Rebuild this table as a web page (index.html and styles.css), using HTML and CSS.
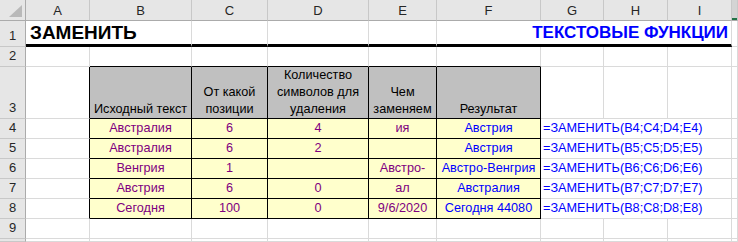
FILE: index.html
```html
<!DOCTYPE html>
<html lang="ru">
<head>
<meta charset="utf-8">
<title>ЗАМЕНИТЬ</title>
<link rel="stylesheet" href="styles.css">
</head>
<body>
<div class="sheet">
  <div class="c corner"><svg width="14" height="13" viewBox="0 0 14 13"><polygon points="13,0 13,12 0,12" fill="#b9b9b9"/></svg></div>
  <div class="c ch">A</div>
  <div class="c ch">B</div>
  <div class="c ch">C</div>
  <div class="c ch">D</div>
  <div class="c ch">E</div>
  <div class="c ch">F</div>
  <div class="c ch">G</div>
  <div class="c ch">H</div>
  <div class="c ch">I</div>
  <div class="c ch chj"></div>

  <div class="c rh">1</div>
  <div class="c thick span2 title">ЗАМЕНИТЬ</div>
  <div class="c thick"></div>
  <div class="c thick"></div>
  <div class="c thick"></div>
  <div class="c thick span4 subtitle">ТЕКСТОВЫЕ ФУНКЦИИ</div>
  <div class="c"></div>

  <div class="c rh">2</div>
  <div class="c"></div>
  <div class="c bb"></div>
  <div class="c bb"></div>
  <div class="c bb"></div>
  <div class="c bb"></div>
  <div class="c bb"></div>
  <div class="c"></div>
  <div class="c"></div>
  <div class="c"></div>
  <div class="c"></div>

  <div class="c rh">3</div>
  <div class="c br"></div>
  <div class="c th">Исходный текст</div>
  <div class="c th"><span>От какой<br>позиции</span></div>
  <div class="c th"><span>Количество<br>символов для<br>удаления</span></div>
  <div class="c th"><span>Чем<br>заменяем</span></div>
  <div class="c th">Результат</div>
  <div class="c"></div>
  <div class="c"></div>
  <div class="c"></div>
  <div class="c"></div>

  <div class="c rh">4</div>
  <div class="c br"></div>
  <div class="c d">Австралия</div>
  <div class="c d">6</div>
  <div class="c d">4</div>
  <div class="c d">ия</div>
  <div class="c d res">Австрия</div>
  <div class="c span3 formula">=ЗАМЕНИТЬ(B4;C4;D4;E4)</div>
  <div class="c"></div>

  <div class="c rh">5</div>
  <div class="c br"></div>
  <div class="c d">Австралия</div>
  <div class="c d">6</div>
  <div class="c d">2</div>
  <div class="c d"></div>
  <div class="c d res">Австрия</div>
  <div class="c span3 formula">=ЗАМЕНИТЬ(B5;C5;D5;E5)</div>
  <div class="c"></div>

  <div class="c rh">6</div>
  <div class="c br"></div>
  <div class="c d">Венгрия</div>
  <div class="c d">1</div>
  <div class="c d"></div>
  <div class="c d">Австро-</div>
  <div class="c d res">Австро-Венгрия</div>
  <div class="c span3 formula">=ЗАМЕНИТЬ(B6;C6;D6;E6)</div>
  <div class="c"></div>

  <div class="c rh">7</div>
  <div class="c br"></div>
  <div class="c d">Австрия</div>
  <div class="c d">6</div>
  <div class="c d">0</div>
  <div class="c d">ал</div>
  <div class="c d res">Австралия</div>
  <div class="c span3 formula">=ЗАМЕНИТЬ(B7;C7;D7;E7)</div>
  <div class="c"></div>

  <div class="c rh">8</div>
  <div class="c br"></div>
  <div class="c d">Сегодня</div>
  <div class="c d">100</div>
  <div class="c d">0</div>
  <div class="c d">9/6/2020</div>
  <div class="c d res">Сегодня 44080</div>
  <div class="c span3 formula">=ЗАМЕНИТЬ(B8;C8;D8;E8)</div>
  <div class="c"></div>

  <div class="c rh">9</div>
  <div class="c"></div>
  <div class="c"></div>
  <div class="c"></div>
  <div class="c"></div>
  <div class="c"></div>
  <div class="c"></div>
  <div class="c"></div>
  <div class="c"></div>
  <div class="c"></div>
  <div class="c"></div>

  <div class="c rh"></div>
  <div class="c"></div>
  <div class="c"></div>
  <div class="c"></div>
  <div class="c"></div>
  <div class="c"></div>
  <div class="c"></div>
  <div class="c"></div>
  <div class="c"></div>
  <div class="c"></div>
  <div class="c"></div>
</div>
</body>
</html>
```

FILE: styles.css
```css
html, body {
  margin: 0;
  padding: 0;
  background: #ffffff;
}

body {
  font-family: "Liberation Sans", Arial, sans-serif;
  font-size: 12.7px;
  color: #000;
}

.sheet {
  display: grid;
  grid-template-columns: 26px 64px 102px 76px 101px 68px 104px 63px 64px 64px 1fr;
  grid-template-rows: 21px 26px 20px 52px repeat(6, 20px) 1fr;
  width: 738px;
  height: 242px;
  overflow: hidden;
}

.c {
  box-sizing: border-box;
  border-right: 1px solid #dadada;
  border-bottom: 1px solid #dadada;
  display: flex;
  align-items: flex-end;
  padding: 0 2px 1px;
  line-height: 17px;
  white-space: nowrap;
  min-width: 0;
}

.corner {
  background: #e6e6e6;
  border-right: 1px solid #ababab;
  border-bottom: 1px solid #ababab;
  justify-content: flex-end;
  align-items: flex-end;
  padding: 0 2px 2px 0;
}

.corner svg { display: block; }

.ch {
  background: #e6e6e6;
  border-right: 1px solid #c8c8c8;
  border-bottom: 1px solid #ababab;
  justify-content: center;
  align-items: center;
  padding: 0;
  font-size: 13px;
  color: #262626;
}

.chj {
  background: #d4d4d4;
  box-shadow: inset 0 -2px 0 #217346;
}

.rh {
  background: #e6e6e6;
  border-right: 1px solid #ababab;
  border-bottom: 1px solid #c8c8c8;
  justify-content: center;
  padding: 0 0 2px;
  font-size: 13px;
  color: #262626;
}

.span2 { grid-column: span 2; }
.span3 { grid-column: span 3; }
.span4 { grid-column: span 4; }

.thick { border-bottom: 3px solid #000; }

.title {
  font-size: 19px;
  font-weight: bold;
  line-height: 22px;
  padding-left: 4px;
  padding-bottom: 0;
}

.subtitle {
  justify-content: flex-end;
  font-size: 17px;
  font-weight: bold;
  line-height: 22px;
  color: #0000ff;
  padding-right: 3px;
  padding-bottom: 0;
}

.bb { border-bottom: 1px solid #000; }
.br { border-right: 1px solid #000; }

.th {
  background: #c0c0c0;
  border-right: 1px solid #000;
  border-bottom: 1px solid #000;
  justify-content: center;
  text-align: center;
  padding: 0 2px;
}

.d {
  background: #ffffcc;
  border-right: 1px solid #000;
  border-bottom: 1px solid #000;
  justify-content: center;
  color: #800080;
  padding: 0 2px 1px;
}

.d.res { color: #0000ff; }

.formula {
  color: #0000ff;
  padding-left: 2px;
}
```
